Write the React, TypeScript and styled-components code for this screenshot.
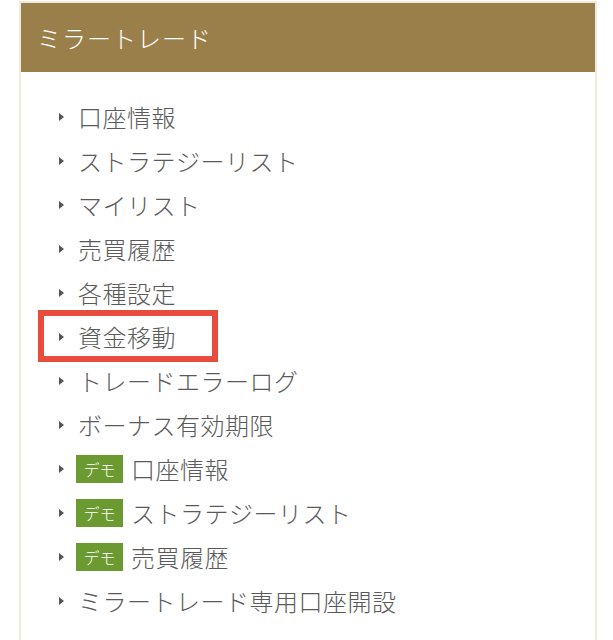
import React from "react";
import styled, { createGlobalStyle } from "styled-components";

const Global = createGlobalStyle`
  html, body { margin: 0; padding: 0; background: #ffffff; }
  body { font-family: "Noto Sans CJK JP", "Noto Sans", sans-serif; }
`;

const Panel = styled.section`
  margin: 1px 0 0 19px;
  width: 578px;
  box-sizing: border-box;
  border: 2px solid #f1eadb;
  border-bottom: none;
  background: #ffffff;
  min-height: 639px;
`;

const Header = styled.h2`
  margin: 0;
  height: 69px;
  background: #9b7f4a;
  color: #ffffff;
  font-size: 24px;
  font-weight: 300;
  line-height: 69px;
  padding-left: 16px;
  letter-spacing: 1px;
`;

const List = styled.ul`
  list-style: none;
  margin: 0;
  padding: 23px 0 0 17px;
`;

const Item = styled.li<{ $highlight?: boolean }>`
  position: relative;
  display: flex;
  align-items: center;
  height: 44px;
  padding-left: 21px;
  color: #5a5a5a;
  font-size: 24px;
  font-weight: 300;
  letter-spacing: 0.5px;
  line-height: 44px;
  &::after {
    content: "";
    display: ${(p) => (p.$highlight ? "block" : "none")};
    position: absolute;
    left: 0;
    top: -5px;
    width: 180px;
    height: 52px;
    box-sizing: border-box;
    border: 6px solid #e84c3d;
  }
`;

const Arrow = styled.span`
  width: 0;
  height: 0;
  border-top: 4px solid transparent;
  border-bottom: 4px solid transparent;
  border-left: 5px solid #555555;
  margin-right: 14px;
  flex-shrink: 0;
`;

const Badge = styled.span`
  display: inline-flex;
  align-items: center;
  justify-content: center;
  width: 47px;
  height: 28px;
  background: #6b9a30;
  color: #ffffff;
  font-size: 16px;
  letter-spacing: 0;
  line-height: 28px;
  margin-right: 8px;
  margin-left: -2px;
`;

const items: { label: string; demo?: boolean; highlight?: boolean }[] = [
  { label: "口座情報" },
  { label: "ストラテジーリスト" },
  { label: "マイリスト" },
  { label: "売買履歴" },
  { label: "各種設定" },
  { label: "資金移動", highlight: true },
  { label: "トレードエラーログ" },
  { label: "ボーナス有効期限" },
  { label: "口座情報", demo: true },
  { label: "ストラテジーリスト", demo: true },
  { label: "売買履歴", demo: true },
  { label: "ミラートレード専用口座開設" },
];

export default function App() {
  return (
    <>
      <Global />
      <Panel>
        <Header>ミラートレード</Header>
        <List>
          {items.map((it, i) => (
            <Item key={i} $highlight={it.highlight}>
              <Arrow />
              {it.demo && <Badge>デモ</Badge>}
              <span>{it.label}</span>
            </Item>
          ))}
        </List>
      </Panel>
    </>
  );
}
